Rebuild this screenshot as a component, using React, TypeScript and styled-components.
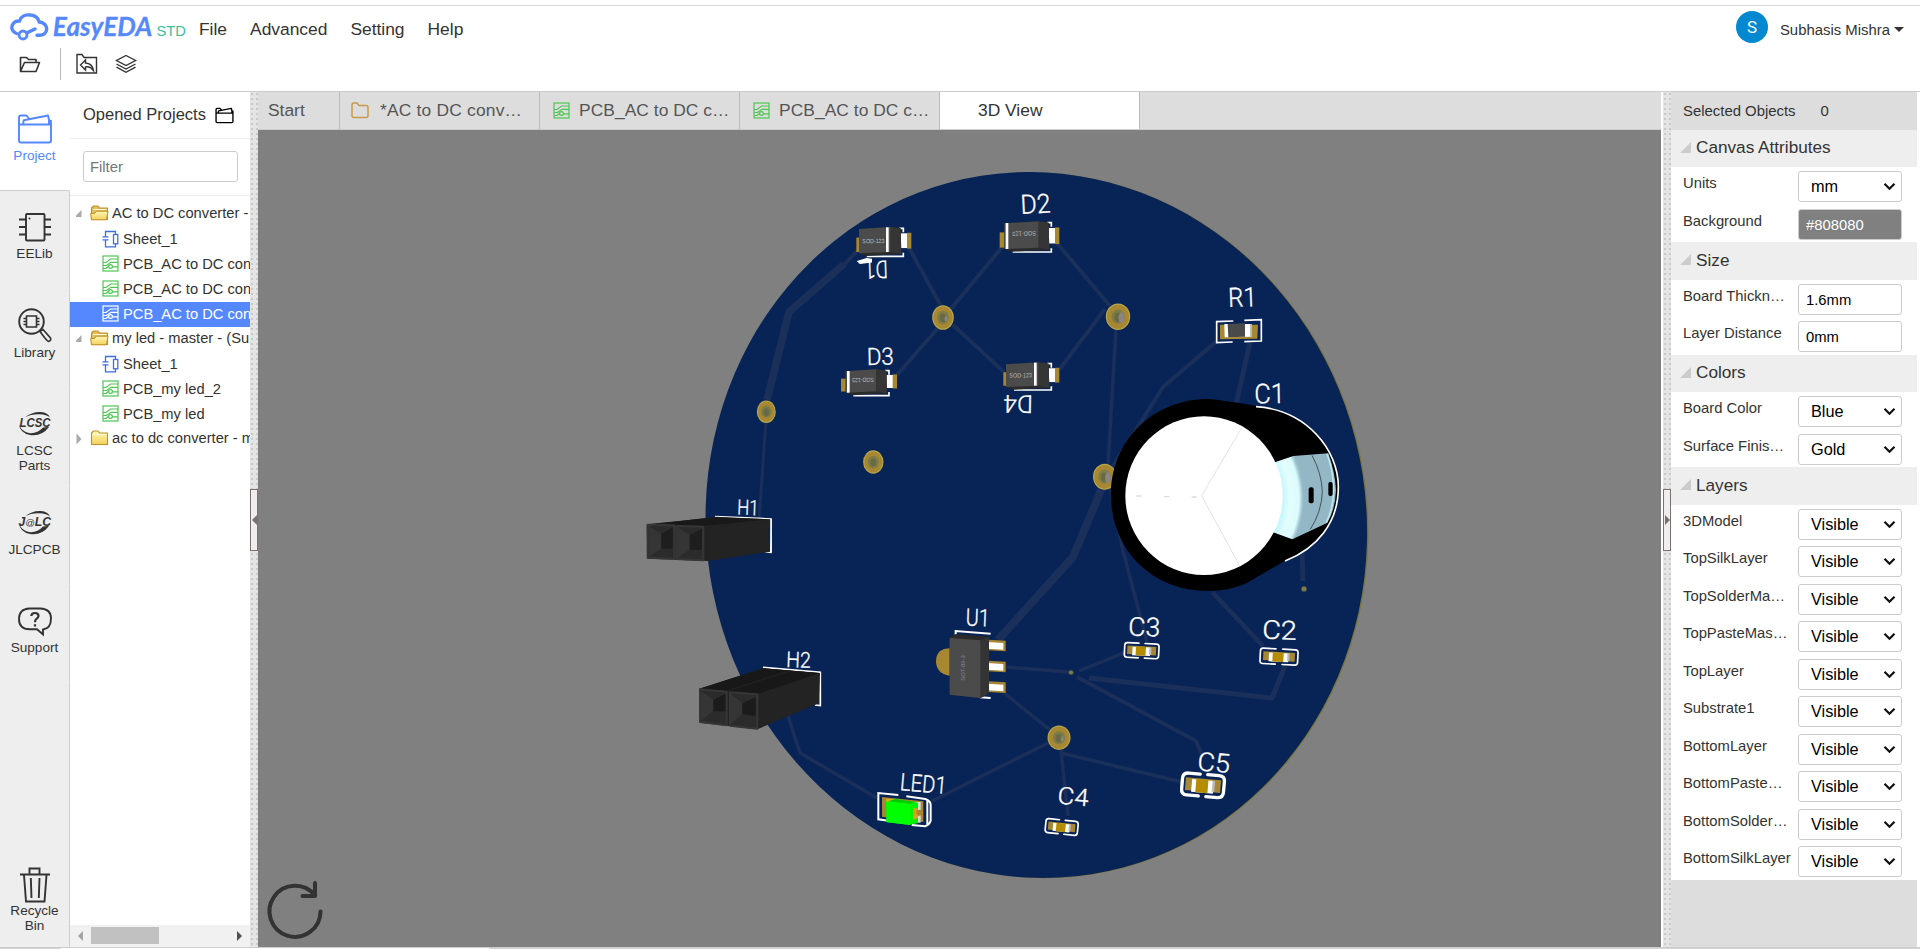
import React from "react";
import styled, { createGlobalStyle } from "styled-components";

const Global = createGlobalStyle`
  * { box-sizing: border-box; }
  body { margin: 0; background: #fff; font-family: "Liberation Sans", Arial, sans-serif; color: #333; overflow: hidden; }
`;

const Page = styled.div`
  display: flex;
  flex-direction: column;
  width: 1920px;
  height: 949px;
  overflow: hidden;
`;
const TopStrip = styled.div`
  height: 6px;
  flex: none;
  border-bottom: 1px solid #d9d9d9;
`;
const Header = styled.header`
  display: flex;
  justify-content: space-between;
  height: 86px;
  flex: none;
  border-bottom: 1px solid #ccc;
`;
const MenuRow = styled.div`
  display: flex;
  align-items: center;
  height: 40px;
  padding-top: 5px;
`;
const LogoSvg = styled.svg`
  display: block;
  margin-left: 8px;
  flex: none;
  overflow: visible;
`;
const MenuItem = styled.span<{ $gap: number }>`
  margin-left: ${(p) => p.$gap}px;
  font-size: 17.4px;
  line-height: 22px;
`;
const ToolRow = styled.div`
  display: flex;
  align-items: center;
  height: 34px;
  padding: 1px 0 0 19px;
`;
const ToolIcon = styled.svg<{ $gap?: number }>`
  margin-left: ${(p) => p.$gap ?? 0}px;
  fill: none;
  stroke: #333;
  stroke-width: 1.4;
`;
const ToolSeparator = styled.i`
  width: 1px;
  height: 32px;
  margin-left: 19px;
  background: #bbb;
`;
const User = styled.div`
  display: flex;
  align-items: flex-start;
  padding: 5px 16px 0 0;
  font-size: 14.9px;
  line-height: 36px;
  height: 50px;
`;
const Avatar = styled.span`
  display: flex;
  align-items: center;
  justify-content: center;
  width: 32px;
  height: 32px;
  margin: 0 12px 0 0;
  border-radius: 50%;
  background: #0288d1;
  color: #fff;
  font: 17px Roboto, sans-serif;
`;
const UserName = styled.span`
  display: flex;
  align-items: center;
  height: 37px;
`;
const Caret = styled.i`
  margin-left: 4px;
  border: 5px solid transparent;
  border-top-color: #333;
  border-bottom: 0;
`;

const Body = styled.div`
  display: flex;
  flex: 1;
  min-height: 0;
`;
const Rail = styled.nav`
  display: flex;
  flex-direction: column;
  width: 70px;
  flex: none;
  background: #eee;
`;
const RailItem = styled.div<{ $active?: boolean; $last?: boolean }>`
  display: flex;
  flex-direction: column;
  align-items: center;
  height: ${(p) => (p.$last ? 93 : 98.5)}px;
  flex: none;
  margin-top: ${(p) => (p.$last ? "auto" : 0)};
  padding-top: ${(p) => (p.$last ? 13 : p.$active ? 20 : 19.5)}px;
  background: ${(p) => (p.$active ? "#fff" : "#eee")};
  color: ${(p) => (p.$active ? "#5588ff" : "#333")};
  border-right: 1px solid ${(p) => (p.$active ? "#fff" : "#ccc")};
  border-bottom: 1px solid ${(p) => (p.$active ? "#ccc" : "transparent")};
  font-size: 13.6px;
  line-height: 15px;
  text-align: center;
`;
const RailFill = styled.div`
  flex: 1;
  border-right: 1px solid #ccc;
`;
const RailIcon = styled.svg`
  width: 36px;
  height: 36px;
  flex: none;
  overflow: visible;
  fill: none;
  stroke: currentColor;
  stroke-width: 1.9;
`;

const Projects = styled.aside`
  display: flex;
  flex-direction: column;
  width: 180px;
  flex: none;
  overflow: hidden;
`;
const ProjectsTitle = styled.div`
  display: flex;
  align-items: center;
  justify-content: space-between;
  height: 47px;
  flex: none;
  padding: 0 16px 2px 13px;
  border-bottom: 1px solid #eee;
  font-size: 16.5px;
  white-space: nowrap;
  svg { color: #000; margin-top: 2px; }
`;
const FilterBox = styled.div`
  height: 57px;
  flex: none;
  padding: 12px 12px 0 13px;
  border-bottom: 1px solid #eee;
`;
const Filter = styled.input`
  display: block;
  width: 155px;
  height: 31px;
  padding: 0 6px;
  border: 1px solid #ccc;
  border-radius: 3px;
  font: 14.8px "Liberation Sans", sans-serif;
  &::placeholder { color: #757575; }
`;
const Tree = styled.div`
  flex: 1;
  padding-top: 6px;
`;
const TreeRow = styled.div<{ $depth: number; $selected?: boolean }>`
  display: flex;
  align-items: center;
  height: 25px;
  padding-left: ${(p) => (p.$depth ? 32 : 6)}px;
  padding-bottom: ${(p) => (p.$depth ? 2 : 4)}px;
  gap: ${(p) => (p.$depth ? 4 : 3)}px;
  background: ${(p) => (p.$selected ? "#5588ff" : "transparent")};
  color: ${(p) => (p.$selected ? "#fff" : "#333")};
  font-size: 14.7px;
  white-space: nowrap;
  svg { flex: none; }
`;
const TreeToggle = styled.svg`
  width: 10px;
  height: 12px;
  margin-right: 1px;
  fill: #aaa;
`;
const HScroll = styled.div`
  display: flex;
  align-items: center;
  height: 22px;
  flex: none;
  padding: 0 8px 1px 8px;
  background: #f1f1f1;
`;
const HThumb = styled.i`
  width: 68px;
  height: 17px;
  margin: 0 auto 0 8px;
  background: #c1c1c1;
`;
const HArrow = styled.i<{ $right?: boolean }>`
  border: 5px solid transparent;
  border-${(p) => (p.$right ? "left" : "right")}-color: ${(p) => (p.$right ? "#505050" : "#a3a3a3")};
  border-${(p) => (p.$right ? "right" : "left")}: 0;
`;

const Splitter = styled.div`
  display: flex;
  align-items: center;
  width: 8px;
  flex: none;
  background:
    radial-gradient(circle at 2px 2px, #c9c9c9 0.9px, transparent 1.3px) 0 0 / 5px 5px,
    #e4e4e4;
`;
const Handle = styled.div`
  display: flex;
  align-items: center;
  justify-content: center;
  width: 8px;
  height: 62px;
  border: 1px solid #7d7070;
  background: #efeded;
`;
const HandleArrow = styled.i<{ $right?: boolean }>`
  border: 5px solid transparent;
  border-${(p) => (p.$right ? "left" : "right")}-color: #7d7070;
  border-${(p) => (p.$right ? "right" : "left")}: 0;
`;

const Main = styled.main`
  display: flex;
  flex-direction: column;
  width: 1405px;
  flex: none;
  padding-right: 2px;
`;
const Tabs = styled.div`
  display: flex;
  height: 38px;
  flex: none;
  background: #ddd;
  border-bottom: 1px solid #ccc;
`;
const Tab = styled.div<{ $w: number; $pad: number; $active?: boolean }>`
  display: flex;
  align-items: center;
  width: ${(p) => p.$w}px;
  padding: 0 0 1px ${(p) => p.$pad}px;
  border-right: 1px solid #bbb;
  background: ${(p) => (p.$active ? "#fff" : "#ddd")};
  color: ${(p) => (p.$active ? "#333" : "#555")};
  font-size: 17.4px;
  white-space: nowrap;
`;
const TabText = styled.span<{ $gap: number; $track?: number }>`
  margin-left: ${(p) => p.$gap}px;
  letter-spacing: ${(p) => p.$track ?? 0}px;
`;
const Canvas = styled.svg`
  display: block;
  width: 1403px;
  height: 817px;
  background: #808080;
`;

const Props = styled.aside`
  width: 246px;
  flex: none;
  background: #ddd;
`;
const PropsHead = styled.div`
  display: flex;
  align-items: center;
  height: 37.5px;
  padding-left: 12px;
  font-size: 14.9px;
  gap: 25px;
`;
const Section = styled.h3`
  display: flex;
  align-items: center;
  height: 37.5px;
  margin: 0;
  padding: 0 0 1px 9px;
  background: #eee;
  font-size: 17.2px;
  font-weight: 400;
`;
const SectionTri = styled.svg`
  margin: 0 5px 1px 0;
  fill: #ccc;
`;
const Field = styled.div`
  display: flex;
  height: 37.5px;
  padding: 4px 15px 0 12px;
  background: #fff;
  font-size: 14.8px;
`;
const FieldLabel = styled.span`
  width: 115px;
  flex: none;
  line-height: 24px;
  white-space: nowrap;
`;
const FieldInput = styled.input<{ $fill?: string }>`
  width: 104px;
  height: 31px;
  padding: 1px 7px 0;
  border: 1px solid #ccc;
  border-radius: 3px;
  outline: 0;
  background: ${(p) => p.$fill ?? "#fff"};
  color: ${(p) => (p.$fill ? "#fff" : "#000")};
  font: 14.8px "Liberation Sans", sans-serif;
`;
const FieldSelect = styled.div`
  display: flex;
  align-items: center;
  justify-content: space-between;
  width: 104px;
  height: 31px;
  padding: 0 5px 0 12px;
  border: 1px solid #ccc;
  border-radius: 3px;
  color: #000;
  font-size: 16.3px;
`;
const Bottom = styled.div`
  height: 2px;
  flex: none;
  border-top: 1px solid #ccc;
  background: linear-gradient(90deg, #d4d4d4 61px, #fff 61px, #fff 489px, #d4d4d4 489px);
`;

/* ---------- icons ---------- */

const Logo = () => (
  <LogoSvg width="184" height="35" viewBox="8 11 184 35">
    <g fill="none" stroke="#5588ff" strokeWidth="3.4" strokeLinecap="round">
      <path d="M16.500 33.500C12.500 32 11 28.500 12.200 25.500C13.400 22.300 16 20.800 19.400 21C21 16.500 25.500 14.300 30.500 15C35 15.500 38.300 18.300 39.300 22C43.500 22.300 46.800 25.300 46.700 29.200C46.500 33 43.300 35.300 39.600 35.300L37 35.200" />
      <circle cx="23" cy="35" r="4" strokeWidth="2.900" />
      <path d="M27 32.800L35 29" />
    </g>
    <text x="52.800" y="35.800" fill="#5588ff" stroke="#5588ff" strokeWidth="0.300" fontFamily="Lato" fontWeight="700" fontStyle="italic" fontSize="27" textLength="99.500" lengthAdjust="spacingAndGlyphs">EasyEDA</text>
    <text x="156.500" y="36" fill="#3bbf97" fontFamily="Liberation Sans" fontSize="15.400" textLength="29.500" lengthAdjust="spacingAndGlyphs">STD</text>
  </LogoSvg>
);

const TwoSheetFolder = ({ w, h, sw = 1.9 }: { w: number; h: number; sw?: number }) => (
  <svg width={w} height={h} viewBox="0 0 36 30" fill="none" stroke="currentColor" strokeWidth={sw} strokeLinejoin="round">
    <path d="M2 10.500V3.500Q2 1.500 4 1.500H9.500L12 4.500M2 10.500H34M6 10.500L6.800 6.200L31 1.500L32 6V10.500M32 6.500L34 7V26.500Q34 28.500 32 28.500H4Q2 28.500 2 26.500V10.500" />
  </svg>
);

const PcbIcon = ({ color = "#4ec653" }: { color?: string }) => (
  <svg width="17" height="17" viewBox="0 0 17 17" fill="none" stroke={color} strokeWidth="1.200">
    <rect x="1" y="1" width="15" height="15" />
    <path d="M1 7.500H4L8.500 4H16M1 10.500H4.500L9 7.300H16M1 13.500H4L6.500 11.200M10.500 11.800H16" />
    <circle cx="8.500" cy="11.500" r="1.900" />
  </svg>
);

const SheetIcon = () => (
  <svg width="17" height="18" viewBox="0 0 17 18" fill="none" stroke="#3c6fe0" strokeWidth="1.300">
    <path d="M3.500 6.500V1.500H13.500V4.500M3.500 10V16.800H13.500V13.800M0.500 6.800H6.500M0.500 9.800H6.500" />
    <rect x="11.500" y="4.500" width="4.300" height="9.300" />
  </svg>
);

const FolderIcon = ({ open }: { open?: boolean }) => (
  <svg width="19" height="16" viewBox="0 0 19 16">
    <defs>
      <linearGradient id="fold" x1="0" y1="0" x2="0" y2="1">
        <stop offset="0" stopColor="#fff8b4" />
        <stop offset="1" stopColor="#f3d05c" />
      </linearGradient>
    </defs>
    <path d="M1.500 14.500V3L3.500 1H8L9.500 3H17.500V14.500Z" fill={open ? "#e3bd58" : "url(#fold)"} stroke="#bf902c" strokeWidth="1.100" strokeLinejoin="round" />
    {open && <path d="M1.500 14.800L0.600 8.500L4.500 8.500L6.300 6.200H18L16.500 14.800Z" fill="url(#fold)" stroke="#bf902c" strokeWidth="1" strokeLinejoin="round" />}
    <path d="M3 4.500H16.500" stroke="#fffbe0" />
  </svg>
);

const Swoosh = () => (
  <g fill="currentColor" stroke="none">
    <path d="M8 10.500Q15 4.500 24 5Q31 5.600 33 10.500Q30 7.500 22 7.200Q14 7 8 10.500Z" />
    <path d="M2 17.500Q3 26 13 28Q25 29.500 32 20Q33 18.500 31.500 20L26 20.500Q20 27 12 26Q5 25 2 17.500Z" />
  </g>
);

const rail = [
  {
    lines: ["EELib"],
    icon: (
      <>
        <rect x="9" y="4" width="18.500" height="26.500" rx="1" />
        <path d="M2 9.500H9M2 17H9M2 24.500H9M27.500 9.500H34M27.500 17H34M27.500 24.500H34" />
        <circle cx="12.500" cy="8.500" r="1" fill="currentColor" stroke="none" />
      </>
    ),
  },
  {
    lines: ["Library"],
    icon: (
      <>
        <circle cx="14.500" cy="12.500" r="12.300" />
        <path d="M9.500 7H19.500V18H9.500ZM6.500 9.500H9.500M6.500 12.500H9.500M6.500 15.500H9.500M19.500 9.500H22.500M19.500 12.500H22.500M19.500 15.500H22.500" strokeWidth="1.600" />
        <path d="M23 22.500L26 20.500L33.500 29Q34.500 31.500 31.500 32.500Q30 32.300 23 22.500Z" strokeWidth="1.700" />
      </>
    ),
  },
  {
    lines: ["LCSC", "Parts"],
    icon: (
      <>
        <Swoosh />
        <text x="2.500" y="19.500" fill="currentColor" stroke="none" fontFamily="Liberation Sans" fontWeight="700" fontStyle="italic" fontSize="13" textLength="31" lengthAdjust="spacingAndGlyphs">LCSC</text>
      </>
    ),
  },
  {
    lines: ["JLCPCB"],
    icon: (
      <>
        <Swoosh />
        <text x="1.500" y="19.500" fill="currentColor" stroke="none" fontFamily="Liberation Sans" fontWeight="700" fontStyle="italic" fontSize="12.500" textLength="32.500" lengthAdjust="spacingAndGlyphs">J<tspan fontWeight="400" fontSize="9.500">@</tspan>LC</text>
      </>
    ),
  },
  {
    lines: ["Support"],
    icon: (
      <>
        <path d="M12.500 4.500H23.500Q34 5 34 14.500Q34 24.500 26 25.500V30.500L20 25.300H12.500Q2 25 2 15Q2 5 12.500 4.500Z" />
        <path d="M14.300 12Q14.500 9 18 9Q21.500 9 21.500 12Q21.500 13.800 19.300 15Q18 16 18 18.300M18 20.300V22.500" strokeWidth="2.200" />
      </>
    ),
  },
];

const layers = ["3DModel", "TopSilkLayer", "TopSolderMa…", "TopPasteMas…", "TopLayer", "Substrate1", "BottomLayer", "BottomPaste…", "BottomSolder…", "BottomSilkLayer"];

type RowData = { kind: "open" | "closed" | "sheet" | "pcb"; text: string; selected?: boolean };
const tree: RowData[] = [
  { kind: "open", text: "AC to DC converter -" },
  { kind: "sheet", text: "Sheet_1" },
  { kind: "pcb", text: "PCB_AC to DC con" },
  { kind: "pcb", text: "PCB_AC to DC con" },
  { kind: "pcb", text: "PCB_AC to DC con", selected: true },
  { kind: "open", text: "my led - master - (Su" },
  { kind: "sheet", text: "Sheet_1" },
  { kind: "pcb", text: "PCB_my led_2" },
  { kind: "pcb", text: "PCB_my led" },
  { kind: "closed", text: "ac to dc converter - m" },
];

const Row = ({ kind, text, selected }: RowData) => {
  const folder = kind === "open" || kind === "closed";
  return (
    <TreeRow $depth={folder ? 0 : 1} $selected={selected}>
      {folder && (
        <TreeToggle viewBox="0 0 10 12">
          <path d={kind === "open" ? "M5.500 3V10H-1.500Z" : "M0.500 1.500L5.500 7L0.500 12.500Z"} />
        </TreeToggle>
      )}
      {folder && <FolderIcon open={kind === "open"} />}
      {kind === "sheet" && <SheetIcon />}
      {kind === "pcb" && <PcbIcon color={selected ? "#fff" : undefined} />}
      <span>{text}</span>
    </TreeRow>
  );
};

const Select = ({ label, value }: { label: string; value: string }) => (
  <Field>
    <FieldLabel>{label}</FieldLabel>
    <FieldSelect>
      {value}
      <svg width="13" height="9" viewBox="0 0 13 9" fill="none" stroke="#111" strokeWidth="2.200">
        <path d="M1.500 1.700L6.500 6.700L11.500 1.700" />
      </svg>
    </FieldSelect>
  </Field>
);
const Input = ({ label, value, fill }: { label: string; value: string; fill?: string }) => (
  <Field>
    <FieldLabel>{label}</FieldLabel>
    <FieldInput defaultValue={value} $fill={fill} />
  </Field>
);
const Heading = ({ children }: { children: React.ReactNode }) => (
  <Section>
    <SectionTri width="11" height="11"><path d="M11 0V11H0Z" /></SectionTri>
    {children}
  </Section>
);

/* ---------- circuit board ---------- */

const traces: [string, number][] = [
  ["M858 250L843 266", 4],
  ["M844 264L789 312L767 400", 7.5],
  ["M766 420L759 520", 3],
  ["M908 246L942 308", 4],
  ["M1003 246L950 310", 4],
  ["M1057 243L1110 306", 4],
  ["M1105 309L1059 370", 4],
  ["M953 325L1004 372", 4],
  ["M938 328L896 376", 4],
  ["M1116 328L1108 466", 3.5],
  ["M1217 341L1163 387L1112 468", 4],
  ["M1250 343L1236 404", 5],
  ["M1102 488L1073 557L998 640", 8],
  ["M1110 485L1122 547L1147 642", 3.5],
  ["M1212 592L1263 646", 4.5],
  ["M1302 552L1303 581", 5],
  ["M1006 667L1068 672", 3.5],
  ["M1079 671L1126 652", 3.5],
  ["M1089 678L1272 698L1285 666", 5],
  ["M1077 677L1196 741L1203 757", 4],
  ["M1004 693L1050 730", 3.5],
  ["M1048 743L932 801", 3.5],
  ["M1061 750L1068 816", 3.5],
  ["M1061 753L1182 782", 3.5],
  ["M788 716L800 753L877 798", 3.5],
];

const vias: [number, number, number, number, number][] = [
  [943, 317.500, 10.800, 12.300, 3],
  [1118, 316.700, 12.200, 13.200, 6],
  [766.300, 411.700, 9.500, 11.300, 0],
  [873.300, 462, 10.200, 11.800, 0],
  [1104.700, 476.700, 11.700, 13, 6],
  [1059, 737.700, 11.500, 12.200, 3],
];

const silk: { t: string; x: number; y: number; w: number; h: number; r: number }[] = [
  { t: "D2", x: 1021, y: 214, w: 30, h: 19, r: -3 },
  { t: "D3", x: 867, y: 365, w: 27, h: 17, r: -1 },
  { t: "D1", x: 887.500, y: 260.500, w: 22.500, h: 17.500, r: 178 },
  { t: "D4", x: 1033, y: 395.500, w: 29, h: 17.500, r: 181 },
  { t: "R1", x: 1228.500, y: 307, w: 28.500, h: 19, r: -2 },
  { t: "C1", x: 1254.500, y: 403.500, w: 30.500, h: 19.500, r: -1 },
  { t: "C3", x: 1128, y: 635.500, w: 32, h: 18.500, r: 2 },
  { t: "C2", x: 1262, y: 638.500, w: 34.500, h: 18.500, r: 2 },
  { t: "U1", x: 965.500, y: 625.500, w: 24, h: 17, r: 2 },
  { t: "H1", x: 737, y: 514.500, w: 21.500, h: 15, r: 2 },
  { t: "H2", x: 786, y: 667, w: 24.500, h: 15.500, r: 2 },
  { t: "LED1", x: 899.500, y: 790, w: 46.500, h: 17, r: 5 },
  { t: "C4", x: 1057, y: 803.500, w: 31, h: 17, r: 5 },
  { t: "C5", x: 1197, y: 770.500, w: 32.500, h: 18.500, r: 4 },
];

const gold = "#a88732";

const HeaderH1 = () => (
  <g>
    <path d="M20 105L228 80L392 88L390 185L205 213L22 206Z" fill="#232323" />
    <path d="M20 103L228 82L392 88L190 107Z" fill="#191919" />
    <path d="M23 104L103 106V206L23 203Z" fill="#2b2b2b" stroke="#363636" strokeWidth="6" strokeLinejoin="round" />
    <path d="M109 108L190 110V211L109 207Z" fill="#2b2b2b" stroke="#363636" strokeWidth="6" strokeLinejoin="round" />
    <path d="M26 108L64 132V175L26 201ZM112 112L149 136V178L112 205Z" fill="#353535" />
    <path d="M64 132L98 112V176H64ZM149 136L186 116V180H149Z" fill="#1e1e1e" />
  </g>
);

const Diode = ({ x, y, w, h, barLeft, text, flip }: { x: number; y: number; w: number; h: number; barLeft?: boolean; text: string; flip?: boolean }) => (
  <g transform={`translate(${x} ${y})`}>
    <path d={`M${w * 0.2} ${h + 9}H${w + 16}V${h - 2}M${w + 4} 4H${w + 16}V16`} fill="none" stroke="#fff" strokeWidth="5" />
    <rect x={barLeft ? -14 : -8} y={h * 0.4} width="16" height={h * 0.55} fill={gold} />
    <rect x={w + 8} y={h * 0.24} width="26" height={h * 0.56} fill="#fff" />
    <rect x={w + 27} y={h * 0.22} width="13" height={h * 0.6} fill={gold} />
    <path d={`M0 6L${w - 22} 0L${w + 8} 4L${w + 10} ${h + 2}L22 ${h + 8}L0 ${h}Z`} fill="#2b2b2b" />
    <path d={`M0 6L${w - 22} 0V${h - 4}L0 ${h}Z`} fill="#4b4b4b" />
    <path d={`M${w - 22} 0L${w + 8} 4L${w + 10} ${h + 2}L${w - 22} ${h - 4}Z`} fill="#353535" />
    <rect x={barLeft ? 4 : w - 36} y={barLeft ? 5 : 1} width="8" height={h - 5} fill="#fff" />
    <text transform={flip ? `translate(${w - 30} ${h * 0.36}) rotate(179)` : `translate(10 ${h * 0.62}) rotate(-1)`} fontSize="18" fontFamily="Liberation Sans" fill="#bbb" textLength={w * 0.57} lengthAdjust="spacingAndGlyphs">{text}</text>
  </g>
);

const Chip = ({ x, y, w, h, rot, sw }: { x: number; y: number; w: number; h: number; rot: number; sw: number }) => {
  const c = sw * 1.7;
  const l = -w / 2, r = w / 2, t = -h / 2, b = h / 2;
  return (
    <g transform={`translate(${x} ${y}) rotate(${rot})`}>
      <path d={`M${-w * 0.09} ${t}H${l + c}Q${l} ${t} ${l} ${t + c}V${b - c}Q${l} ${b} ${l + c} ${b}H${-w * 0.09}M${w * 0.09} ${t}H${r - c}Q${r} ${t} ${r} ${t + c}V${b - c}Q${r} ${b} ${r - c} ${b}H${w * 0.09}`} fill="none" stroke="#fff" strokeWidth={sw} strokeLinecap="round" />
      <rect x={-w * 0.42} y={-h * 0.3} width={w * 0.84} height={h * 0.58} fill={gold} />
      <rect x={-w * 0.27} y={-h * 0.24} width={w * 0.52} height={h * 0.58} fill="#fff" />
      <rect x={-w * 0.17} y={-h * 0.26} width={w * 0.29} height={h * 0.6} fill="#b58b00" />
      <rect x={w * 0.22} y={-h * 0.24} width={w * 0.06} height={h * 0.5} fill="#bbb" />
    </g>
  );
};

const Board = () => (
  <Canvas viewBox="258 130 1403 817">
    <defs>
      <radialGradient id="stripe" gradientUnits="userSpaceOnUse" cx="462" cy="715" r="300">
        <stop offset="0.790" stopColor="#c9f7fb" />
        <stop offset="0.860" stopColor="#e2fdfe" />
        <stop offset="0.950" stopColor="#dcfbfd" />
        <stop offset="0.985" stopColor="#9cc3d0" />
        <stop offset="1" stopColor="#93b7c4" />
      </radialGradient>
    </defs>
    <ellipse rx="330.200" ry="353.500" transform="translate(1037.600 525.200) rotate(-8.950)" fill="#77743f" />
    <ellipse rx="330.200" ry="353.500" transform="translate(1036.300 525) rotate(-8.950)" fill="#082456" />
    <g fill="none" stroke="#1a2f59" strokeLinejoin="round">
      {traces.map(([d, w]) => <path key={d} d={d} strokeWidth={w} />)}
    </g>
    {vias.map(([x, y, rx, ry, m]) => (
      <g key={x}>
        <ellipse cx={x} cy={y} rx={rx} ry={ry} fill="#b5a54c" />
        <ellipse cx={x} cy={y} rx={rx - 1.200} ry={ry - 1.200} fill={gold} />
        <ellipse cx={x} cy={y} rx={rx * 0.540} ry={ry * 0.540} fill="#7d7c48" />
        <ellipse cx={x} cy={y + 0.500} rx={rx * 0.300} ry={ry * 0.340} fill="#686a44" />
        {m > 0 && <ellipse cx={x + rx * 0.280} cy={y + 1} rx={m * 0.480} ry={m * 0.900} fill="#8a8583" />}
      </g>
    ))}
    <g fill="#7f7a45" stroke="#213a52" strokeWidth="1">
      <circle cx="1304" cy="589" r="3" />
      <circle cx="1071" cy="672.500" r="2.500" />
    </g>
    <g fill="#fff" fontFamily="Roboto" fontWeight="300" stroke="#fff" strokeWidth="0.350">
      {silk.map((s) => (
        <text key={s.t} transform={`translate(${s.x} ${s.y}) rotate(${s.r})`} fontSize={s.h / 0.711} textLength={s.w} lengthAdjust="spacingAndGlyphs">{s.t}</text>
      ))}
    </g>

    {/* diodes */}
    <g transform="translate(640 160) scale(0.33333)">
      <path d="M654 304L680 296L694 298V306L660 310Z" fill="#fff" stroke="#fff" strokeWidth="4" />
      <Diode x={657} y={201} w={117} h={79} text="SOD-123" />
      <Diode x={1093} y={184} w={125} h={83} barLeft flip text="SOD-123" />
      <Diode x={617} y={628} w={114} h={70} barLeft flip text="SOD-123" />
      <Diode x={1098} y={607} w={120} h={74} text="SOD-123" />
    </g>

    {/* resistor, capacitors on the right */}
    <g transform="translate(1050 260) scale(0.33333)">
      <path d="M550 183L500 185V248L548 246M583 181L634 179V243L583 245" fill="none" stroke="#fff" strokeWidth="5" />
      <path d="M510 194H624L622 236L510 238Z" fill={gold} />
      <path d="M523 192H606L604 230L524 232Z" fill="#fff" />
      <path d="M533 192L585 190V230L535 232Z" fill="#4a4a4a" />
      <path d="M600 192H606V230H600Z" fill="#bbb" />
      <Chip x={275} y={1172} w={103} h={44} rot={3} sw={5} />
      <Chip x={687} y={1190} w={113} h={46} rot={3} sw={5} />
      <path d="M475 417Q500 418 640 441C770 465 865 570 865 682C865 790 800 860 700 905L592 968Q540 993 475 993C305 993 183 870 183 705C183 540 310 417 475 417Z" fill="#000" />
      <path d="M618 440C770 450 866 570 865 682C865 790 800 865 705 903" fill="none" stroke="#fff" strokeWidth="5" />
      <path d="M670 608L730 588L835 580Q856 640 858 690Q856 750 831 789L727 838L665 815Z" fill="url(#stripe)" />
      <path d="M831 582Q850 630 851 690Q850 745 829 788" fill="none" stroke="#b9e6f0" strokeWidth="5" />
      <path d="M786 586Q815 640 817 695Q815 755 781 808" fill="none" stroke="#111" strokeWidth="1.800" />
      <rect x="776" y="682" width="15" height="48" rx="6" fill="#000" />
      <rect x="835" y="666" width="13" height="42" rx="6" fill="#000" />
      <ellipse cx="462" cy="707" rx="236" ry="238" fill="#fff" />
      <path d="M576 502L455 707L568 916" fill="none" stroke="#e2e2e2" strokeWidth="3" />
      <path d="M259 708H274M342 710H357M425 711H440" stroke="#ddd" strokeWidth="4" />
    </g>

    {/* pin headers, regulator, LED */}
    <g transform="translate(640 490) scale(0.33333)">
      <path d="M225 80L393 87V187L375 185" fill="none" stroke="#fff" strokeWidth="5" />
      <HeaderH1 />
      <path d="M388 110V160" stroke="#082456" strokeWidth="5" />
      <path d="M393 87V187" stroke="#fff" strokeWidth="4" />
      <path d="M369 532L541 547V647L525 645" fill="none" stroke="#fff" strokeWidth="5" />
      <path d="M178 596L370 535L540 549L536 640L352 718L180 698Z" fill="#232323" />
      <path d="M178 596L370 535L540 549L352 612Z" fill="#181818" />
      <path d="M262 603L450 542" stroke="#242424" strokeWidth="3" />
      <path d="M180 598L260 605V706L180 696ZM270 607L352 613V716L270 707Z" fill="#2b2b2b" stroke="#363636" strokeWidth="6" strokeLinejoin="round" />
      <path d="M184 603L220 630V662L184 692ZM273 611L307 640V672L273 702Z" fill="#353535" />
      <path d="M220 630L256 612V664H220ZM307 640L347 622V678L307 672Z" fill="#1b1b1b" />

      <path d="M947 434V423L1052 431M1020 622L1052 624" fill="none" stroke="#fff" strokeWidth="6" />
      <path d="M931 475Q888 475 888 515Q890 552 931 557Z" fill={gold} />
      {[450, 513, 575].map((y) => (
        <g key={y}>
          <path d={`M1044 ${y - 1}L1097 ${y + 2}V${y + 34}L1044 ${y + 31}Z`} fill={gold} />
          <path d={`M1042 ${y + 6}L1090 ${y + 9}V${y + 29}L1042 ${y + 26}Z`} fill="#fff" />
        </g>
      ))}
      <path d="M929 443L948 432L1047 440V610L1022 624L929 614Z" fill="#2a2a2a" />
      <path d="M929 444L1022 451V624L929 614Z" fill="#4b4b4b" />
      <path d="M1022 451L1047 440V610L1022 624Z" fill="#343434" />
      <text transform="translate(976 572) rotate(-90)" fontSize="17" fontFamily="Liberation Sans" fill="#888" textLength="76" lengthAdjust="spacingAndGlyphs">SOT-89-3</text>

      <path d="M775 915L715 909V988L745 992M799 919L856 927Q872 932 872 945V992Q868 1005 855 1009L815 1005M862 930V1006" fill="none" stroke="#fff" strokeWidth="6" />
      <path d="M726 921L850 934V996L726 980Z" fill={gold} />
      <path d="M822 936H842V998H822Z" fill="#ddd" />
      <path d="M738 928L762 926L820 935L834 938V1000L805 1004L739 996Z" fill="#00f000" />
      <path d="M740 933L812 941V1005L740 997Z" fill="#00ff00" />
      <path d="M738 926L765 928L740 937Z" fill="#e5a81a" />
      <path d="M820 953L832 956Q836 966 846 968Q836 972 833 984L820 990Z" fill="#e0a020" />
      <circle cx="838" cy="968" r="9" fill={gold} />
      <path d="M765 928L822 935L812 941L745 934Z" fill="#00c800" />
    </g>

    {/* lower capacitors */}
    <g transform="translate(900 580) scale(0.33333)">
      <Chip x={485} y={741} w={97} h={42} rot={6} sw={5} />
      <Chip x={909} y={616} w={126} h={66} rot={5} sw={10} />
    </g>

    {/* reset view */}
    <g fill="none" stroke="#333" strokeWidth="4" strokeLinecap="round" strokeLinejoin="round">
      <path d="M578 911.500A25.500 25.500 0 1 1 572.500 895.500" transform="translate(-257.500 0)" />
      <path d="M315 883V896H302.500" />
    </g>
  </Canvas>
);

export default function App() {
  return (
    <Page>
      <Global />
      <TopStrip />
      <Header>
        <div>
          <MenuRow>
            <Logo />
            <MenuItem $gap={7}>File</MenuItem>
            <MenuItem $gap={23}>Advanced</MenuItem>
            <MenuItem $gap={23}>Setting</MenuItem>
            <MenuItem $gap={23}>Help</MenuItem>
          </MenuRow>
          <ToolRow>
            <ToolIcon width="22" height="18" viewBox="0 0 22 18">
              <path d="M1.500 16V2.500H7.500L9.500 4.500H17V7.500M1.500 16.500L5.500 7.500H20.500L17 16.500Z" strokeWidth="1.600" strokeLinejoin="round" />
            </ToolIcon>
            <ToolSeparator />
            <ToolIcon $gap={15} width="22" height="21" viewBox="0 0 22 21">
              <path d="M1 20V1.500H6L8 4.500H20.500V20ZM9.500 7L4.500 12L9.500 17V14Q14 13 17.500 17.500Q16.500 10.500 9.500 10Z" />
            </ToolIcon>
            <ToolIcon $gap={17} width="22" height="20" viewBox="0 0 22 20">
              <path d="M11 1.500L20.500 6.500L11 11.500L1.500 6.500ZM1.500 10L11 15L20.500 10M1.500 13.200L11 18.300L20.500 13.200" />
            </ToolIcon>
          </ToolRow>
        </div>
        <User>
          <Avatar>S</Avatar>
          <UserName>Subhasis Mishra<Caret /></UserName>
        </User>
      </Header>
      <Body>
        <Rail>
          <RailItem $active>
            <RailIcon as="div"><TwoSheetFolder w={36} h={34} /></RailIcon>
            Project
          </RailItem>
          {rail.map((r) => (
            <RailItem key={r.lines[0]}>
              <RailIcon viewBox="0 0 36 36">{r.icon}</RailIcon>
              {r.lines.map((l) => <span key={l}>{l}</span>)}
            </RailItem>
          ))}
          <RailFill />
          <RailItem $last>
            <RailIcon viewBox="0 0 36 36">
              <path d="M3 7.500H33M12.500 7V1.500H22.500V7M7 8L9 34.500H27.500L29.500 8M13.800 11L14.500 31M22.500 11L21.800 31" />
            </RailIcon>
            <span>Recycle</span>
            <span>Bin</span>
          </RailItem>
        </Rail>
        <Projects>
          <ProjectsTitle>
            Opened Projects
            <TwoSheetFolder w={19} h={17} sw={2.6} />
          </ProjectsTitle>
          <FilterBox><Filter placeholder="Filter" /></FilterBox>
          <Tree>
            {tree.map((t, i) => <Row key={i} {...t} />)}
          </Tree>
          <HScroll>
            <HArrow />
            <HThumb />
            <HArrow $right />
          </HScroll>
        </Projects>
        <Splitter><Handle><HandleArrow /></Handle></Splitter>
        <Main>
          <Tabs>
            <Tab $w={82} $pad={10}>Start</Tab>
            <Tab $w={200} $pad={11}>
              <svg width="18" height="18" viewBox="0 0 18 18" fill="none" stroke="#c79a4a" strokeWidth="1.500">
                <path d="M1 14.500V4Q1 2 3 2H6L8 4.500H15Q17 4.500 17 6.500V14.500Q17 16.500 15 16.500H3Q1 16.500 1 14.500Z" />
              </svg>
              <TabText $gap={11} $track={0.2}>*AC to DC conv…</TabText>
            </Tab>
            <Tab $w={200} $pad={13}><PcbIcon /><TabText $gap={9} $track={0.05}>PCB_AC to DC c…</TabText></Tab>
            <Tab $w={200} $pad={13}><PcbIcon /><TabText $gap={9} $track={0.05}>PCB_AC to DC c…</TabText></Tab>
            <Tab $w={200} $pad={38} $active>3D View</Tab>
          </Tabs>
          <Board />
        </Main>
        <Splitter><Handle><HandleArrow $right /></Handle></Splitter>
        <Props>
          <PropsHead><span>Selected Objects</span><span>0</span></PropsHead>
          <Heading>Canvas Attributes</Heading>
          <Select label="Units" value="mm" />
          <Input label="Background" value="#808080" fill="#808080" />
          <Heading>Size</Heading>
          <Input label="Board Thickn…" value="1.6mm" />
          <Input label="Layer Distance" value="0mm" />
          <Heading>Colors</Heading>
          <Select label="Board Color" value="Blue" />
          <Select label="Surface Finis…" value="Gold" />
          <Heading>Layers</Heading>
          {layers.map((l) => <Select key={l} label={l} value="Visible" />)}
        </Props>
      </Body>
      <Bottom />
    </Page>
  );
}
